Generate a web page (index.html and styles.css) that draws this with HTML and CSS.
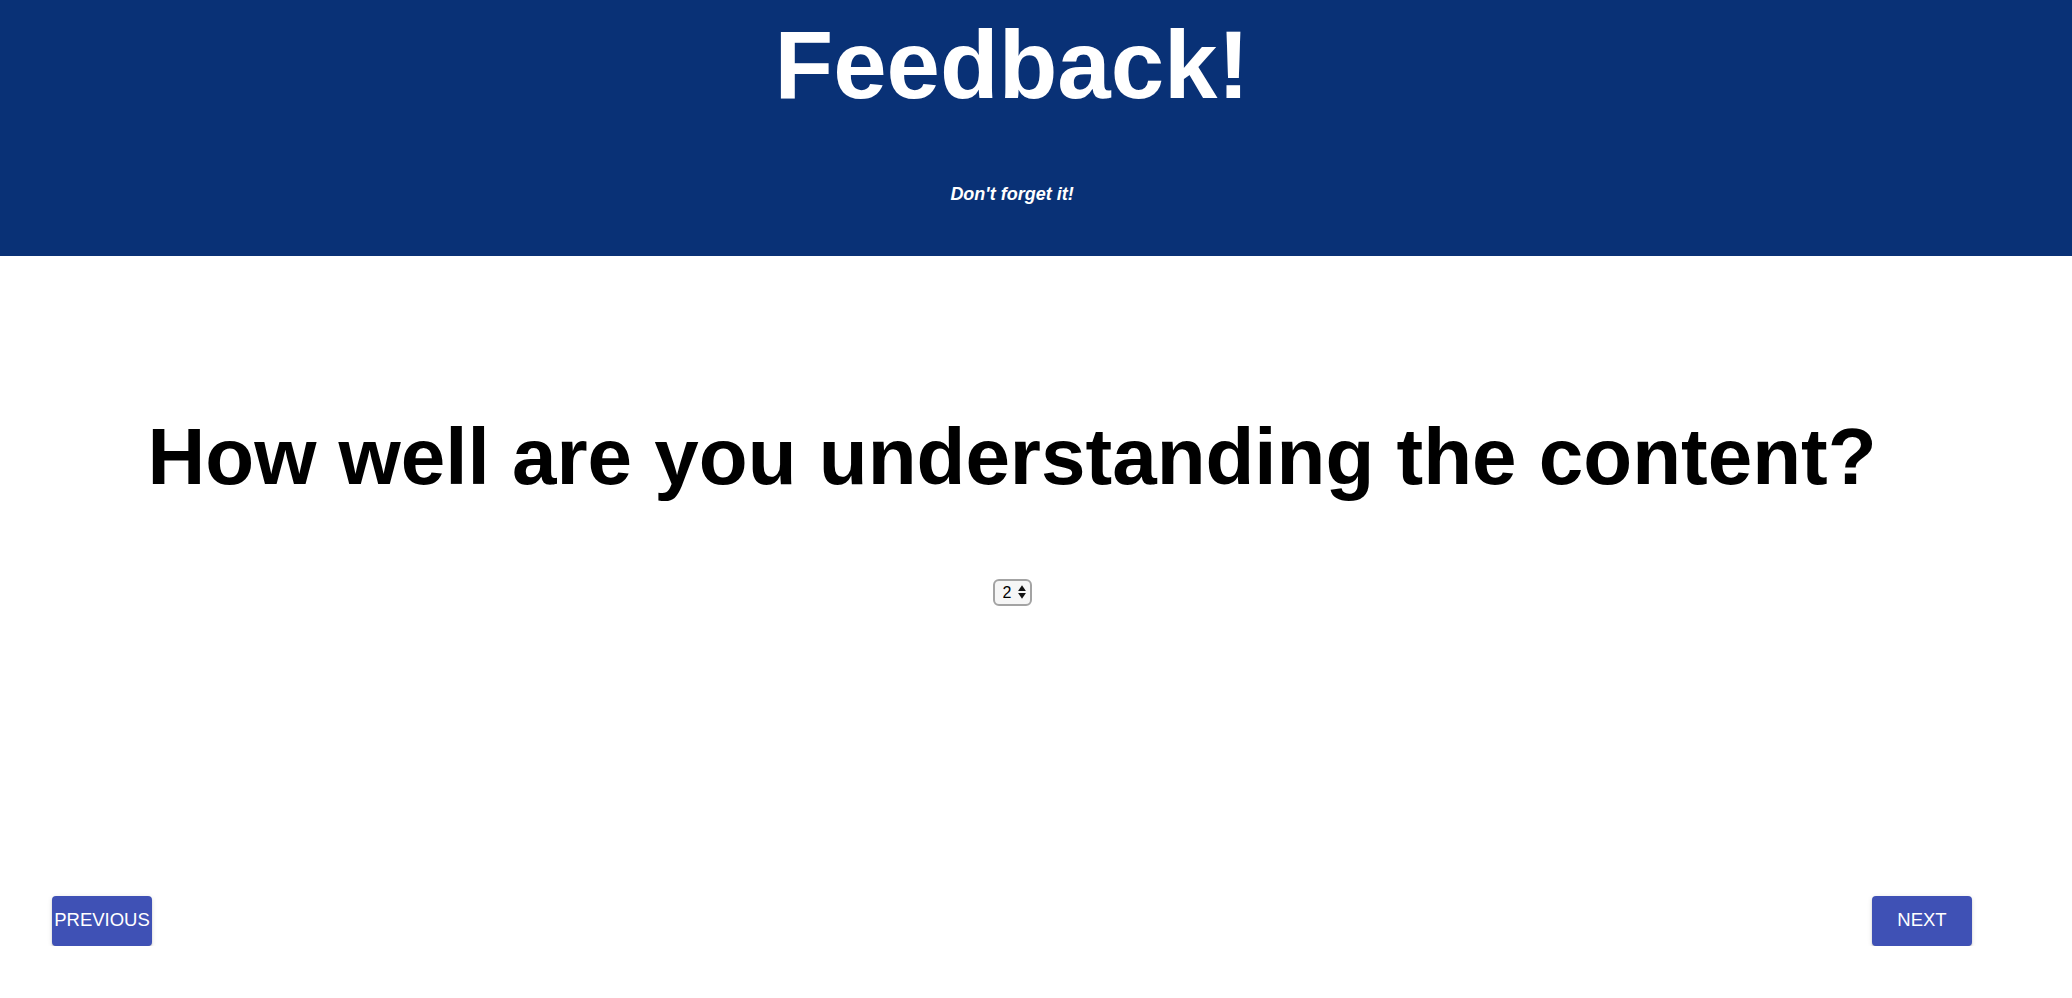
FILE: index.html
```html
<!DOCTYPE html>
<html lang="en">
<head>
<meta charset="utf-8">
<title>Feedback!</title>
<link rel="stylesheet" href="styles.css">
</head>
<body>
<header class="banner">
  <div class="banner-inner">
    <h1 class="banner-title">Feedback!</h1>
    <p class="banner-sub">Don't forget it!</p>
  </div>
</header>
<main class="page">
  <h2 class="question">How well are you understanding the content?</h2>
  <div class="answer">
    <span class="select-wrap">
      <select class="rating">
        <option>1</option>
        <option selected>2</option>
        <option>3</option>
        <option>4</option>
        <option>5</option>
      </select>
      <svg class="select-arrows" width="8" height="14" viewBox="0 0 8 14" aria-hidden="true">
        <path d="M4 0.3 L7.9 6 L0.1 6 Z" fill="#111"/>
        <path d="M4 13.7 L7.9 8 L0.1 8 Z" fill="#111"/>
      </svg>
    </span>
  </div>
  <nav class="nav-row">
    <button class="nav-btn">Previous</button>
    <button class="nav-btn">Next</button>
  </nav>
</main>
</body>
</html>
```

FILE: styles.css
```css
html, body {
  margin: 0;
  padding: 0;
  background: #ffffff;
}

body {
  font-family: "Liberation Sans", Arial, Helvetica, sans-serif;
  color: #000;
}

.banner {
  background: #093176;
  height: 256px;
  box-sizing: border-box;
  padding-top: 17px;
}

.banner-inner {
  width: 1920px;
  margin-left: 52px;
  display: flex;
  flex-direction: column;
  align-items: center;
  color: #ffffff;
}

.banner-title {
  margin: 0;
  font-size: 96px;
  line-height: 96px;
  font-weight: 700;
}

.banner-sub {
  margin: 72px 0 0 0;
  font-size: 18px;
  line-height: 18px;
  font-weight: 700;
  font-style: italic;
}

.page {
  width: 1920px;
  margin-left: 52px;
  display: flex;
  flex-direction: column;
  align-items: center;
}

.question {
  margin: 161px 0 0 0;
  font-size: 80px;
  line-height: 80px;
  font-weight: 700;
  white-space: nowrap;
}

.answer {
  margin-top: 82px;
  display: flex;
  justify-content: center;
}

.select-wrap {
  position: relative;
  display: inline-block;
  width: 39px;
  height: 27px;
}

.rating {
  -webkit-appearance: none;
  appearance: none;
  box-sizing: border-box;
  width: 39px;
  height: 27px;
  margin: 0;
  padding: 0 0 0 8px;
  border: 2px solid #a3a3a3;
  border-radius: 6px;
  background: #f6f6f6;
  font-family: "Liberation Sans", Arial, sans-serif;
  font-size: 16px;
  color: #000;
  outline: none;
}

.select-arrows {
  position: absolute;
  left: 25px;
  top: 6px;
  pointer-events: none;
}

.nav-row {
  align-self: stretch;
  margin-top: 290px;
  display: flex;
  justify-content: space-between;
}

.nav-btn {
  width: 100px;
  height: 50px;
  padding: 0 1px 3px 1px;
  border: none;
  border-radius: 4px;
  background: #3f51b5;
  color: #ffffff;
  font-family: "Liberation Sans", Arial, sans-serif;
  font-size: 18.5px;
  font-weight: 400;
  text-transform: uppercase;
  white-space: nowrap;
  box-shadow: 0 3px 1px -2px rgba(0,0,0,0.2), 0 2px 2px 0 rgba(0,0,0,0.14), 0 1px 5px 0 rgba(0,0,0,0.12);
  cursor: pointer;
}
```
